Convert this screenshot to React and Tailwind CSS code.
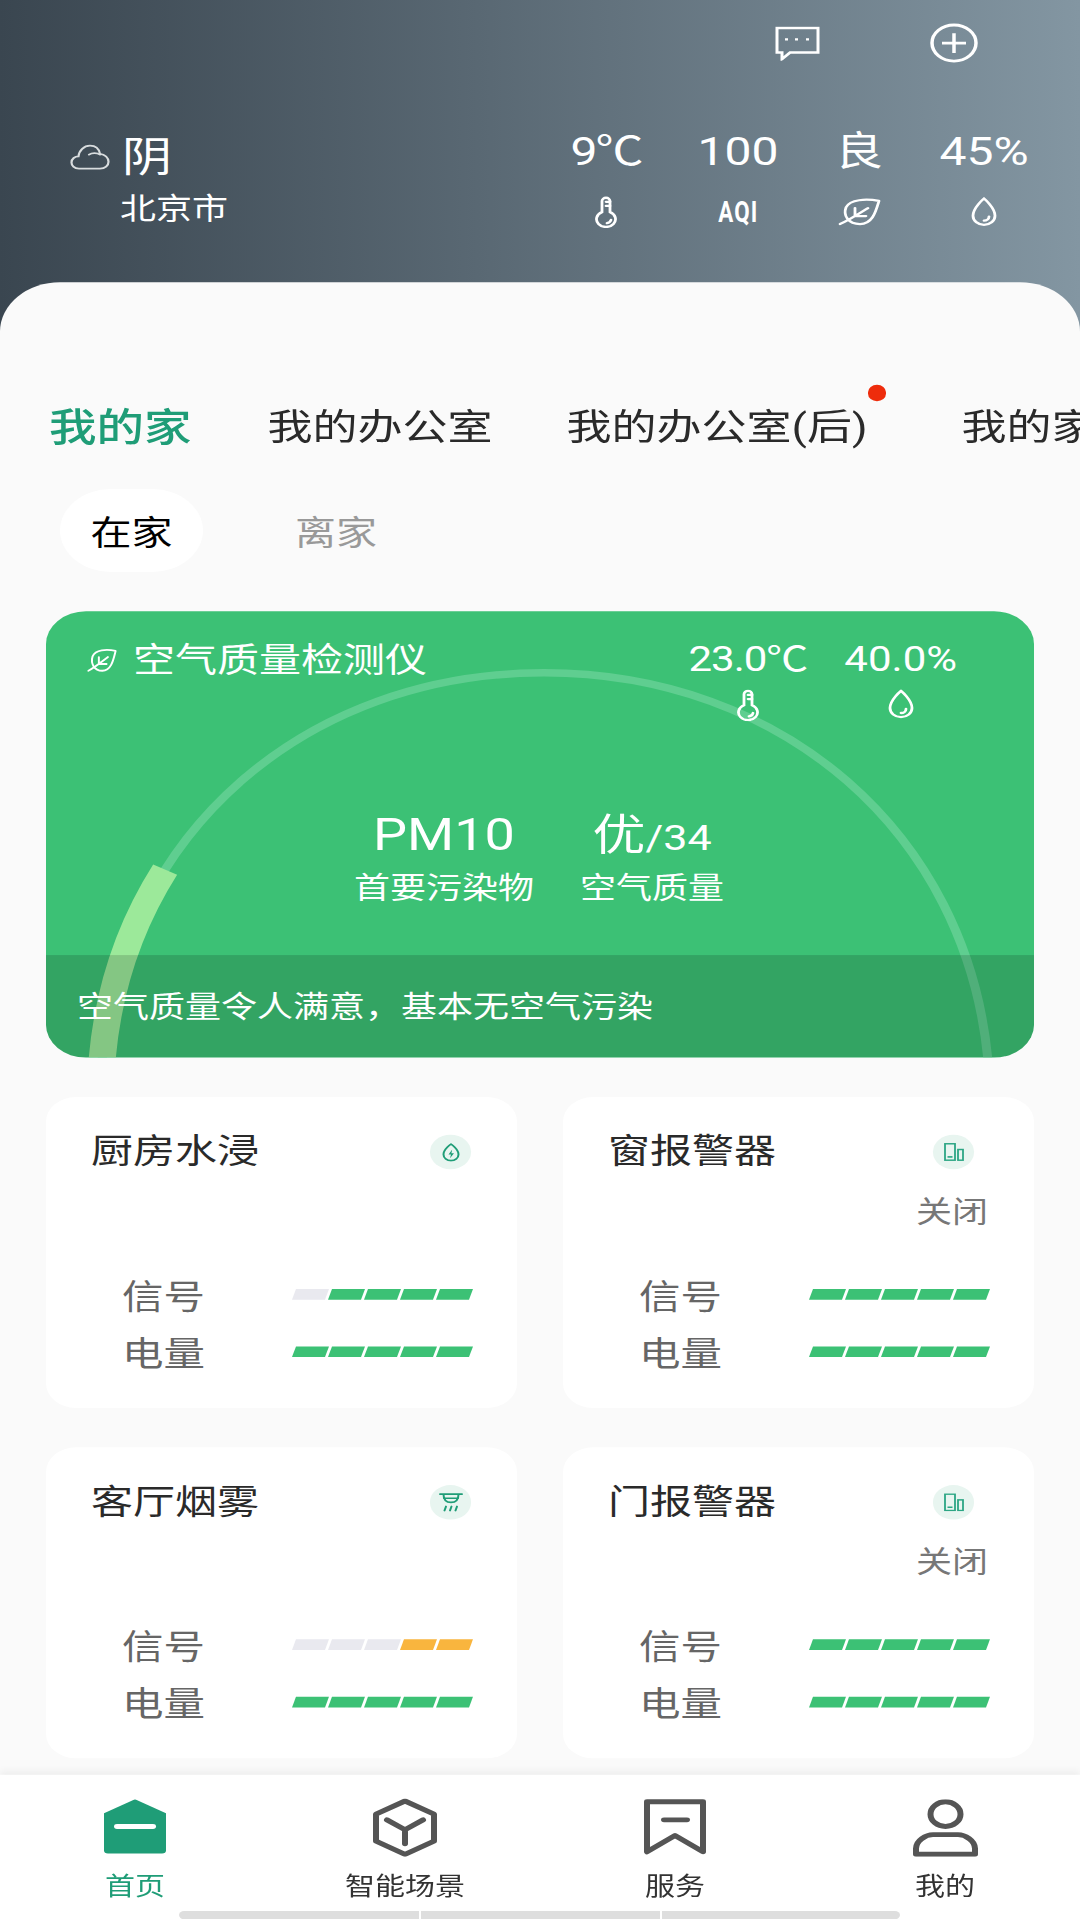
import React from 'react'

const GREEN = '#1f9d77'

const Thermo = () => (
  <svg width="24" height="39" viewBox="0 0 24 39" fill="none" stroke="white" strokeWidth="2.8" strokeLinecap="round">
    <path d="M8 6a4 4 0 0 1 8 0V19.5A9.5 9.5 0 1 1 8 19.5Z" />
    <path d="M12 7h4M12 12h4" />
    <path d="M17 29a5 5 0 0 1-4 4" />
  </svg>
)

const Drop = () => (
  <svg width="28" height="36" viewBox="0 0 28 36" fill="none" stroke="white" strokeWidth="2.8" strokeLinecap="round">
    <path d="M14 2C14 2 3 13 3 23a11 11 0 0 0 22 0C25 13 14 2 14 2Z" />
    <path d="M19 24a5 5 0 0 1-5 5" />
  </svg>
)

const Leaf = ({ w = 43, h = 35 }) => (
  <svg width={w} height={h} viewBox="0 0 43 36" preserveAspectRatio="none" fill="none" stroke="white" strokeWidth="2.8" strokeLinecap="round" strokeLinejoin="round">
    <path d="M41 4C28 1 12 2 8 12C5 22 10 33 22 33C35 33 38 16 41 4Z" />
    <path d="M2 33C10 29 16 24 30 13M17 23H28M17 23V13" />
  </svg>
)

const Cloud = () => (
  <svg width="40" height="35" viewBox="0 0 40 34" fill="none" stroke="#d8dcde" strokeWidth="2.2" strokeLinecap="round">
    <path d="M9 31C4 31 1.5 27 1.5 23.5C1.5 19 5 16 8.5 16C9 9 14 3 20 3C25.5 3 29 7 30 13C35 13.5 38.5 18 38.5 22.5C38.5 27.5 35 31 30 31Z" />
    <path d="M19 14C22 11.5 27 11.5 30 14" />
  </svg>
)

const WaterIcon = () => (
  <svg width="18" height="23" viewBox="0 0 18 23" fill="none" stroke={GREEN} strokeWidth="2">
    <path d="M9 1.5C9 1.5 1.5 7.5 1.5 14a7.5 7.5 0 0 0 15 0C16.5 7.5 9 1.5 9 1.5Z" />
    <path d="M10.2 8L6.5 14.2H9L8 18.5L12 12.5H9.4Z" fill={GREEN} stroke="none" />
  </svg>
)

const SensorIcon = () => (
  <svg width="20" height="22" viewBox="0 0 20 22" fill="none" stroke="#2ca684" strokeWidth="1.8">
    <rect x="1" y="1" width="10" height="20" />
    <path d="M3.5 17H8.5" strokeWidth="2" />
    <rect x="14" y="8" width="5" height="13" />
  </svg>
)

const SmokeIcon = () => (
  <svg width="24" height="24" viewBox="0 0 24 24" fill="none" stroke={GREEN} strokeWidth="2" strokeLinecap="round">
    <path d="M1 2H23M4.5 2C4.5 9 7 12 12 12C17 12 19.5 9 19.5 2" />
    <path d="M5 7H19" />
    <path d="M7 17L5.5 22M12.5 17L11 22M18 17L16.5 22" />
  </svg>
)

const HomeIcon = () => (
  <svg className="mb-[3px]" width="62" height="67" viewBox="0 0 62 67">
    <path d="M31 0L62 17V62a4 4 0 0 1-4 4H4a4 4 0 0 1-4-4V17Z" fill={GREEN} />
    <rect x="10" y="30" width="42" height="6" rx="3" fill="white" />
  </svg>
)

const SceneIcon = () => (
  <svg width="64" height="71" viewBox="0 0 64 71" fill="none" stroke="#555" strokeWidth="6" strokeLinejoin="round" strokeLinecap="round">
    <path d="M32 3L61 19V52L32 68L3 52V19Z" />
    <path d="M14 26L32 38L50 26M32 38V55" />
  </svg>
)

const ServiceIcon = () => (
  <svg className="mb-[2px]" width="62" height="70" viewBox="0 0 62 70" fill="none" stroke="#555" strokeWidth="6" strokeLinejoin="round" strokeLinecap="round">
    <path d="M3 5H59V66L31 46L3 66Z" />
    <path d="M20 27H43" />
  </svg>
)

const MineIcon = () => (
  <svg width="65" height="70" viewBox="0 0 65 70" fill="none" stroke="#555" strokeWidth="6" strokeLinejoin="round">
    <circle cx="32.5" cy="18" r="15" />
    <path d="M3 67V60C3 50 13 43 20 43H45C52 43 62 50 62 60V67Z" />
  </svg>
)

const stats = [
  { value: '9℃', width: 'w-[130px]', tight: true, icon: <Thermo /> },
  {
    value: '100',
    width: 'w-[134px]',
    icon: <span className="scale-x-[0.62] text-[36px] leading-[40px] font-bold tracking-wider text-white">AQI</span>,
  },
  { value: '良', width: 'w-[108px]', icon: <Leaf /> },
  { value: '45%', width: 'w-[142px]', icon: <Drop /> },
]

const Bars = ({ on, color = 'bg-[#3cc175]' }) => (
  <div className="mb-[8px] flex gap-[3px]">
    {[0, 1, 2, 3, 4].map((i) => (
      <div
        key={i}
        className={`h-[13px] w-[33px] -skew-x-[17deg] ${i >= 5 - on ? color : 'bg-[#e9e9ef]'}`}
      ></div>
    ))}
  </div>
)

const devices = [
  { name: '厨房水浸', icon: <WaterIcon />, signal: 4 },
  { name: '窗报警器', icon: <SensorIcon />, signal: 5, state: '关闭' },
  { name: '客厅烟雾', icon: <SmokeIcon />, signal: 2, signalColor: 'bg-[#f9b53e]' },
  { name: '门报警器', icon: <SensorIcon />, signal: 5, state: '关闭' },
]

const DeviceCard = ({ device }) => (
  <div className="relative h-[379px] rounded-[30px] bg-white pt-[37px] pr-[46px] pl-[45px]">
    <div className="flex items-center justify-between">
      <span className="text-[42px] leading-[60px] text-[#2a2a2a]">{device.name}</span>
      <div className={`flex h-[42px] w-[41px] items-center justify-center rounded-full bg-[#e8f5f0] ${device.state ? 'mr-[14px]' : ''}`}>
        {device.icon}
      </div>
    </div>
    <div className="h-[59px] pt-[18px] text-right text-[36px] leading-[50px] text-[#777]">{device.state}</div>
    <div className="mt-[53px] flex items-center justify-between pl-[31px]">
      <span className="text-[41.5px] leading-[70px] text-[#666]">信号</span>
      <Bars on={device.signal} color={device.signalColor} />
    </div>
    <div className="flex items-center justify-between pl-[31px]">
      <span className="text-[41.5px] leading-[70px] text-[#666]">电量</span>
      <Bars on={5} />
    </div>
  </div>
)

const nav = [
  { label: '首页', icon: <HomeIcon />, active: true },
  { label: '智能场景', icon: <SceneIcon /> },
  { label: '服务', icon: <ServiceIcon /> },
  { label: '我的', icon: <MineIcon /> },
]

export default function App() {
  return (
    <div className="h-[1920px] w-[1080px] overflow-hidden bg-[#fafafa]">
      {/* the whole screen is squashed vertically, as in the reference */}
      <div className="h-[2340px] w-[1080px] origin-top scale-y-[0.8205] font-['Roboto','Noto_Sans_CJK_SC',sans-serif]">
        {/* Header */}
        <div className="h-[404px] bg-linear-to-r from-[#3a4650] to-[#8396a2] pt-[28px] text-white">
          <div className="flex h-[49px] items-center justify-end gap-[110px] pr-[102px]">
            <svg width="45" height="42" viewBox="0 0 45 42" fill="none" stroke="white" strokeWidth="3">
              <path d="M2 2H43V32H15L7 40V32H2Z" />
              <path d="M10 16H13M20 16H23M31 16H34" strokeWidth="3" />
            </svg>
            <svg width="48" height="49" viewBox="0 0 48 49" fill="none" stroke="white" strokeWidth="3.5">
              <circle cx="24" cy="24.5" r="22" />
              <path d="M12 24.5H36M24 12.5V36.5" />
            </svg>
          </div>
          <div className="mt-[73px] flex pr-[25px]">
            <div className="pl-[70px]">
              <div className="flex h-[80px] items-center gap-[12px] pt-[3px]">
                <Cloud />
                <span className="text-[50px]">阴</span>
              </div>
              <div className="pt-[1px] pl-[50px] text-[36px] leading-[48px]">北京市</div>
            </div>
            <div className="ml-auto flex">
              {stats.map((s) => (
                <div key={s.value} className={`flex flex-col items-center ${s.width}`}>
                  <span className={`text-[48px] leading-[70px] ${s.tight ? 'tracking-[-2px]' : ''}`}>{s.value}</span>
                  <div className="mt-[18px] flex h-[40px] items-center justify-center">{s.icon}</div>
                </div>
              ))}
            </div>
          </div>
        </div>

        {/* Panel */}
        <div className="relative -mt-[60px] h-[1819px] rounded-t-[60px] bg-[#fafafa] pt-[147px]">
          <div className="relative flex overflow-hidden pl-[49px] whitespace-nowrap">
            <span className="text-[47.5px] leading-[60px] font-medium text-[#1f9d77]">我的家</span>
            <span className="ml-[76px] text-[45px] leading-[60px] text-[#2a2a2a]">我的办公室</span>
            <span className="ml-[74px] text-[45px] leading-[60px] text-[#2a2a2a]">我的办公室(后)</span>
            <span className="ml-[94px] text-[45px] leading-[60px] text-[#2a2a2a]">我的家</span>
          </div>
          <div className="absolute top-[125px] left-[868px] h-[20px] w-[18px] rounded-full bg-[#ee2c0c]"></div>

          <div className="mt-[45px] flex items-center pl-[60px]">
            <div className="flex h-[101px] w-[143px] items-center justify-center rounded-full bg-white pt-[9px] text-[41px] text-black">在家</div>
            <span className="ml-[92px] pt-[9px] text-[41px] text-[#999]">离家</span>
          </div>

          {/* Air quality card */}
          <div className="relative mx-[46px] mt-[48px] flex h-[544px] flex-col overflow-hidden rounded-[40px] bg-[#3cc175] text-white">
            <svg className="absolute inset-0" width="988" height="544" viewBox="0 0 988 544" fill="none">
              <path d="M56 548C75 270 260 75 498 75C736 75 921 270 942 548" stroke="#5fce90" strokeWidth="9" />
              <path d="M56 548C75 270 260 75 498 75" stroke="#9ce99a" strokeWidth="27" pathLength="100" strokeDasharray="34 100" />
            </svg>
            <div className="relative flex justify-between pt-[29px] pr-[77px] pl-[41px]">
              <div className="flex h-[60px] items-center gap-[16px] pt-[1px]">
                <Leaf w={30} h={30} />
                <span className="text-[42px]">空气质量检测仪</span>
              </div>
              <div className="flex gap-[37px]">
                <div className="flex flex-col items-center">
                  <span className="text-[42px] leading-[60px] tracking-[-1px]">23.0℃</span>
                  <div className="mt-[6px]"><Thermo /></div>
                </div>
                <div className="flex flex-col items-center">
                  <span className="text-[42px] leading-[60px]">40.0%</span>
                  <div className="mt-[6px]"><Drop /></div>
                </div>
              </div>
            </div>
            <div className="relative mt-[104px] flex justify-center gap-[46px] pr-[2px]">
              <div className="flex flex-col items-center">
                <span className="text-[54px] leading-[70px]">PM10</span>
                <span className="mt-[4px] text-[36px] leading-[50px]">首要污染物</span>
              </div>
              <div className="flex flex-col items-center">
                <span className="block h-[70px] leading-[70px]">
                  <span className="text-[53px]">优</span>
                  <span className="text-[43px]">/34</span>
                </span>
                <span className="mt-[4px] text-[36px] leading-[50px]">空气质量</span>
              </div>
            </div>
            <div className="relative mt-auto flex h-[125px] items-center bg-black/15 pt-[2px] pl-[31px] text-[36px]">
              空气质量令人满意，基本无空气污染
            </div>
          </div>

          {/* Devices */}
          <div className="mx-[46px] mt-[48px] grid grid-cols-2 gap-x-[46px] gap-y-[48px]">
            {devices.map((d) => (
              <DeviceCard key={d.name} device={d} />
            ))}
          </div>
        </div>

        {/* Bottom nav */}
        <div className="relative flex h-[177px] flex-col bg-white shadow-[0_-4px_8px_rgba(0,0,0,0.05)]">
          <div className="grid grid-cols-4 pt-[28px]">
            {nav.map((item) => (
              <div key={item.label} className="flex flex-col items-center">
                <div className="flex h-[72px] items-end">{item.icon}</div>
                <span className={`mt-[14px] text-[30px] leading-[44px] ${item.active ? 'text-[#1f9d77]' : 'text-[#333]'}`}>
                  {item.label}
                </span>
              </div>
            ))}
          </div>
          <div className="mt-auto mr-[2px] mb-[1px] flex h-[10px] w-[721px] gap-[2px] self-center">
            <div className="w-[240px] rounded-l-full bg-[#dedede]"></div>
            <div className="w-[239px] bg-[#dedede]"></div>
            <div className="w-[238px] rounded-r-full bg-[#dedede]"></div>
          </div>
        </div>
      </div>
    </div>
  )
}
